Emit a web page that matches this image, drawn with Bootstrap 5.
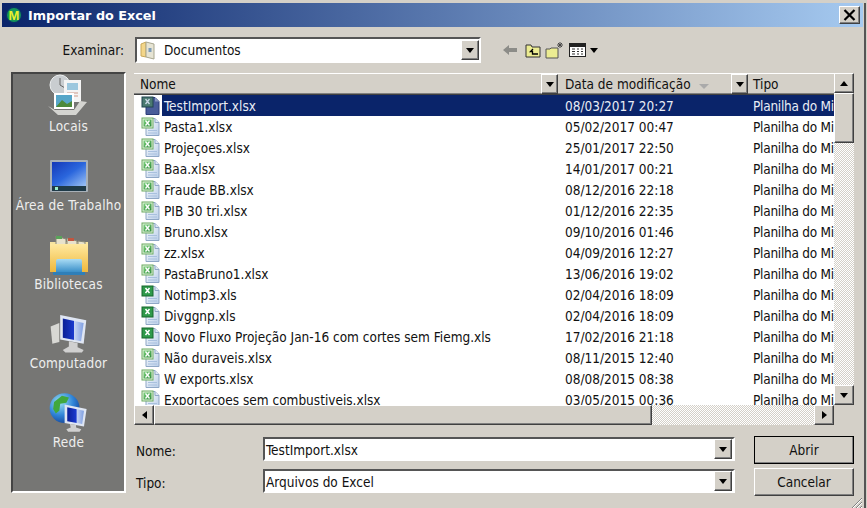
<!DOCTYPE html>
<html lang="pt"><head><meta charset="utf-8"><title>Importar do Excel</title>
<link href="https://cdn.jsdelivr.net/npm/bootstrap@5.3.0/dist/css/bootstrap.min.css" rel="stylesheet">
<style>
html,body{margin:0;height:508px;overflow:hidden;background:#d4d0c8}
body{font-family:"DejaVu Sans",Verdana,sans-serif;font-stretch:condensed;font-size:13.5px;color:#111;line-height:1}
.dlg{width:866px;height:508px;border-right:2px solid #555;position:relative}
.title-bar{margin:3px 0 0 2px;width:861px;height:24px;background:linear-gradient(90deg,#0a246a,#a6caf0);color:#fff;font:bold 12.8px "DejaVu Sans",sans-serif;padding-left:3px;padding-right:3px}
.title-bar svg{margin-right:5px}
.raised{background:#d4d0c8;border:1px solid;border-color:#fff #404040 #404040 #fff;box-shadow:inset -1px -1px #808080;font:inherit;color:inherit}
.x-btn{width:21px;height:18px;margin-left:auto}
.look-row{height:26px;margin-top:10px}
.lbl-look{width:124px;text-align:right;margin-right:11px;padding-top:2px}
.sunken{background:#fff;border:2px solid;border-color:#555 #fff #fff #555;outline:1px solid #d4d0c8}
.look{width:346px;height:26px;padding-left:3px}
.look .fname{margin-left:8px;padding-top:2px}
.dd{width:18px;height:20px;margin-left:auto;flex:none}
.tri{width:0;height:0;border-left:4.5px solid transparent;border-right:4.5px solid transparent;border-top:5px solid #000}
.tri-u{border-top:0;border-bottom:5px solid #000}
.tri-l{border:4.5px solid transparent;border-left:0;border-right:5px solid #000}
.tri-r{border:4.5px solid transparent;border-right:0;border-left:5px solid #000}
.tools{margin-left:22px;gap:4px}
.main-row{margin-top:9px}
.places{margin-left:11px;width:115px;height:421px;background:#767674;border:2px solid;border-color:#444 #fff #fff #444;color:#eee;font-size:13.5px;white-space:nowrap;letter-spacing:.2px}
.place{height:79px;text-align:center}
.place svg{display:block;margin:0 auto 1px}
.place span{display:block;line-height:14px}
.right-col{margin-left:8px;width:720px;padding-top:1px}
.list-wrap{height:352px}
.list-col{width:700px;flex:none}
.hdr{height:22px;background:#d4d0c8;border-top:1px solid #fff;border-bottom:1px solid #404040;box-shadow:inset 0 -1px #808080}
.hc{padding-top:4px;height:20px}
.c1{width:425px;flex:none;padding-left:6px}.c2{width:190px;flex:none;padding-left:6px}.c3{width:85px;flex:none;padding-left:4px;overflow:hidden;white-space:nowrap}
.hdd{width:17px;height:20px;margin-left:auto;margin-right:1px;flex:none;margin-top:-4px}
.sort-tri{border-left:5px solid transparent;border-right:5px solid transparent;border-top:5px solid #aaa;width:0;height:0;margin-left:8px}
.rows{height:310px;overflow:hidden;background:#fff}
.frow{height:21px;flex:none;white-space:nowrap}
.frow .c1{padding-left:7px}
.frow .c1 svg{flex:none;margin-right:1px;margin-top:1px}
.fn{padding:5px 2px 0;height:21px;display:block;flex:1}
.frow .c2,.frow .c3{height:21px;padding-top:5px}
.frow .c3{letter-spacing:-.25px}
.sel{color:#e8ecf5}
.sel .fn,.sel .c2,.sel .c3{background:#0a246a}
.hbar{height:20px;background:repeating-conic-gradient(#fff 0 25%,#d4d0c8 0 50%) 0 0/2px 2px}
.sbtn{width:20px;height:20px;flex:none}
.hthumb{width:498px;height:20px;flex:none}
.vbar{width:20px;height:332px;background:repeating-conic-gradient(#fff 0 25%,#d4d0c8 0 50%) 0 0/2px 2px}
.vthumb{height:50px;width:20px;flex:none}
.form-rows{margin-top:12px;gap:8px}
.form-line{height:24px}
.lab{width:129px;padding-left:2px;padding-top:8px}
.inp{width:472px;height:24px;padding:5px 1px 0}
.inp .dd{margin-top:-5px;height:20px}
.bbtn{width:100px;height:28px;margin-left:19px;margin-top:-1px;flex:none;padding:1px 0 0}
.bdef{outline:1px solid #000;outline-offset:-1px}
.grip{position:absolute;right:1px;bottom:1px}
</style></head>
<body>
<svg width="0" height="0" class="d-block">
<defs>
<linearGradient id="pg" x1="0" y1="0" x2="1" y2="1"><stop offset="0" stop-color="#fff"/><stop offset="1" stop-color="#b8cde8"/></linearGradient>
<linearGradient id="gb" x1="0" y1="0" x2="1" y2="1"><stop offset="0" stop-color="#7fd27f"/><stop offset="1" stop-color="#2d8a3a"/></linearGradient>
<linearGradient id="scr" x1="0" y1="0" x2="1" y2="1"><stop offset="0" stop-color="#1338b8"/><stop offset=".5" stop-color="#2a66dd"/><stop offset="1" stop-color="#9cc2f4"/></linearGradient>
<linearGradient id="scr2" x1="0" y1="0" x2="1" y2="0"><stop offset="0" stop-color="#0a1f96"/><stop offset=".55" stop-color="#1a3bd0"/><stop offset=".56" stop-color="#c5d4f2"/><stop offset="1" stop-color="#7f9fe2"/></linearGradient>
<linearGradient id="fold" x1="0" y1="0" x2="0" y2="1"><stop offset="0" stop-color="#ffe9a0"/><stop offset="1" stop-color="#efb83c"/></linearGradient>
<linearGradient id="bl" x1="0" y1="0" x2="0" y2="1"><stop offset="0" stop-color="#a9dcf5"/><stop offset="1" stop-color="#3a8fc8"/></linearGradient>
<radialGradient id="globe" cx=".35" cy=".3" r=".8"><stop offset="0" stop-color="#9fe4f0"/><stop offset=".55" stop-color="#2f84d8"/><stop offset="1" stop-color="#123c90"/></radialGradient>
<symbol id="xl" viewBox="0 0 20 20">
<path d="M5 1.500h9l4 4v13H5z" fill="url(#pg)" stroke="#8fa7c6"/><path d="M14 1.500v4h4" fill="#dfe9f5" stroke="#8fa7c6"/>
<path d="M7 13.500h9M7 16h9" stroke="#a8c0de"/>
<rect x="1" y="1" width="11" height="10" fill="#e3f3dd" stroke="#6dab62"/>
<rect x="2.500" y="2.500" width="8" height="7" fill="url(#gb)"/>
<path d="M4.500 3.500l4 5M8.500 3.500l-4 5" stroke="#fff" stroke-width="1.300"/></symbol>
<symbol id="xl2" viewBox="0 0 20 20">
<path d="M5 1.500h9l4 4v13H5z" fill="url(#pg)" stroke="#8fa7c6"/><path d="M14 1.500v4h4" fill="#dfe9f5" stroke="#8fa7c6"/>
<path d="M7 13.500h9M7 16h9" stroke="#a8c0de"/>
<rect x="1" y="1" width="11" height="10" fill="#2f9a4b" stroke="#17672c"/>
<path d="M4.500 3l4 5M8.500 3l-4 5" stroke="#fff" stroke-width="1.500"/></symbol>
<symbol id="xls" viewBox="0 0 20 20">
<path d="M5 1.500h9l4 4v13H5z" fill="#4a5d9a" stroke="#2c3d78"/><path d="M14 1.500v4h4" fill="#8896c0"/>
<rect x="1" y="1" width="11" height="10" fill="#4b7a70" stroke="#20434f"/>
<path d="M4.500 3l4 5M8.500 3l-4 5" stroke="#c9d6e4" stroke-width="1.300"/></symbol>
</defs></svg>
<div class="dlg">
<div class="title-bar d-flex align-items-center">
<svg width="18" height="18" viewBox="0 0 18 18"><circle cx="9" cy="9" r="8.500" fill="#0b2f6a"/><circle cx="9" cy="9" r="7" fill="#14965a"/><text x="9" y="13.500" text-anchor="middle" font-size="13" font-weight="700" font-family="Liberation Sans" fill="#e9f02c">M</text></svg>
<span>Importar do Excel</span>
<button class="x-btn raised p-0 d-flex align-items-center justify-content-center" type="button" aria-label="Fechar"><svg class="m-0" width="13" height="12" viewBox="0 0 13 12"><path d="M1.500 1l10 10M11.500 1l-10 10" stroke="#000" stroke-width="2.200"/></svg></button>
</div>

<div class="look-row d-flex align-items-center">
<div class="lbl-look">Examinar:</div>
<div class="look sunken d-flex align-items-center">
<svg width="16" height="20" viewBox="0 0 16 20"><path d="M1 4l5-2v15l-5-1z" fill="#f3d68a" stroke="#c9a85a"/><path d="M6 2l8 2v15l-8-2z" fill="#e6e4d4" stroke="#a8a68f"/><rect x="8.500" y="8" width="3" height="4" fill="#7c9bb8"/></svg>
<span class="fname">Documentos</span>
<div class="dd raised d-flex align-items-center justify-content-center"><div class="tri"></div></div>
</div>
<div class="tools d-flex align-items-center">
<svg class="me-1" width="14" height="12" viewBox="0 0 14 12"><path d="M0 6l6-5v3h8v4H6v3z" fill="#8c8c88"/></svg>
<svg width="16" height="15" viewBox="0 0 16 15"><path d="M1 14V2h5l1 2h8v10z" fill="#ecec92" stroke="#333"/><path d="M8 6L5.500 8.500H7.500V11H13" fill="none" stroke="#000" stroke-width="1.300"/></svg>
<svg width="20" height="18" viewBox="0 0 20 18"><path d="M1 17V8h4l1-1h7v10z" fill="#ecec92" stroke="#555"/><path d="M15 1v6M12 4h6M13 2l4 4M17 2l-4 4" stroke="#444"/></svg>
<div class="d-flex align-items-center"><svg class="me-1" width="17" height="14" viewBox="0 0 17 14"><rect x=".5" y=".5" width="16" height="13" fill="#fff" stroke="#222"/><rect x="1" y="1" width="15" height="3" fill="#222"/><path d="M3 6h3M8 6h2M12 6h2M3 8.500h3M8 8.500h2M12 8.500h2M3 11h3M8 11h2M12 11h2" stroke="#333"/></svg>
<div class="tri"></div></div>
</div>
</div>

<div class="main-row d-flex">
<div class="places">
<div class="place"><svg width="48" height="44" viewBox="0 0 48 44"><circle cx="15" cy="11" r="10" fill="#c9cdd0" stroke="#eceff0"/><path d="M15 4v7l5 3" stroke="#666" fill="none"/><rect x="19" y="6" width="17" height="22" fill="#f4f4f4"/><rect x="22" y="9" width="11" height="7" fill="#9cc7de"/><path d="M22 19h11M22 22h11" stroke="#c98"/><rect x="9" y="19" width="20" height="16" fill="#fff"/><rect x="11" y="21" width="16" height="12" fill="#57a6c8"/><path d="M11 33l6-7 5 4 5-3v6z" fill="#4c8a3a"/><path d="M3 32l10 9h18l11-13-7-1-6 9H10z" fill="#d4d4d0"/></svg><span>Locais</span></div>
<div class="place"><svg width="48" height="44" viewBox="0 0 48 44"><rect x="5" y="7" width="38" height="32" rx="1" fill="#a7b0b8"/><rect x="7" y="9" width="34" height="24" fill="url(#scr)"/><rect x="7" y="33" width="34" height="5" fill="#1f3a48"/><rect x="10" y="34" width="3" height="3" fill="#9ec"/></svg><span>Área de Trabalho</span></div>
<div class="place"><svg width="48" height="44" viewBox="0 2 48 44"><path d="M5 12h38v7H5z" fill="#f7e4a0"/><path d="M11 6l10 3v6H11zM22 8l10 3v4H22zM33 11l7 1v4h-7z" fill="#e8e2cc" stroke="#887"/><path d="M11 6h6v3h-6z" fill="#59a35a"/><path d="M23 8h6v3h-6z" fill="#c2553f"/><path d="M5 14h38v28H5z" fill="url(#fold)"/><path d="M13 29h22a2 2 0 0 1 2 2v11H11V31a2 2 0 0 1 2-2z" fill="url(#bl)"/><path d="M8 42h32v3H8z" fill="#2f7fb8"/></svg><span>Bibliotecas</span></div>
<div class="place"><svg width="48" height="44" viewBox="0 0 48 44"><g transform="translate(3 1.500) scale(.87)"><path d="M3 16l10-4v22l-8 2z" fill="#d8d8d4"/><path d="M14 3l30 6-3 27-27-5z" fill="#dfe6f3"/><path d="M17 7l24 5-3 21-21-4z" fill="url(#scr2)"/><path d="M24 33l10 2v5l7 3-2 3H20l-3-3 7-4z" fill="#d0d0d0"/></g></svg><span>Computador</span></div>
<div class="place"><svg width="48" height="44" viewBox="0 0 48 44"><g transform="translate(2 .500) scale(.88)"><circle cx="20" cy="20" r="17" fill="url(#globe)"/><path d="M8 13l9-7 8 2-3 6-7 1-1 8-4 3-3-5zM24 26l6 2-2 8-4 1z" fill="#41a83e"/><path d="M20 16l25 5-3 20-22-4z" fill="#dfe6f3"/><path d="M23 19l19 4-2 15-17-3z" fill="url(#scr2)"/><path d="M26 38l7 1v3l6 2-2 3H24l-2-3 5-2z" fill="#d0d0d0"/></g></svg><span>Rede</span></div>
</div>

<div class="right-col">
<div class="list-wrap d-flex">
<div class="list-col">
<div class="hdr d-flex">
<div class="c1 hc d-flex">Nome<div class="hdd raised d-flex align-items-center justify-content-center"><div class="tri"></div></div></div>
<div class="c2 hc d-flex">Data de modificação<div class="sort-tri align-self-center"></div><div class="hdd raised d-flex align-items-center justify-content-center"><div class="tri"></div></div></div>
<div class="c3 hc">Tipo</div>
</div>
<div class="rows d-flex flex-column">
<div class="frow sel d-flex"><div class="c1 d-flex"><svg width="20" height="20"><use href="#xls"/></svg><span class="fn">TestImport.xlsx</span></div><div class="c2">08/03/2017 20:27</div><div class="c3">Planilha do Microsoft</div></div>
<div class="frow d-flex"><div class="c1 d-flex"><svg width="20" height="20"><use href="#xl"/></svg><span class="fn">Pasta1.xlsx</span></div><div class="c2">05/02/2017 00:47</div><div class="c3">Planilha do Microsoft</div></div>
<div class="frow d-flex"><div class="c1 d-flex"><svg width="20" height="20"><use href="#xl"/></svg><span class="fn">Projeçoes.xlsx</span></div><div class="c2">25/01/2017 22:50</div><div class="c3">Planilha do Microsoft</div></div>
<div class="frow d-flex"><div class="c1 d-flex"><svg width="20" height="20"><use href="#xl"/></svg><span class="fn">Baa.xlsx</span></div><div class="c2">14/01/2017 00:21</div><div class="c3">Planilha do Microsoft</div></div>
<div class="frow d-flex"><div class="c1 d-flex"><svg width="20" height="20"><use href="#xl"/></svg><span class="fn">Fraude BB.xlsx</span></div><div class="c2">08/12/2016 22:18</div><div class="c3">Planilha do Microsoft</div></div>
<div class="frow d-flex"><div class="c1 d-flex"><svg width="20" height="20"><use href="#xl"/></svg><span class="fn">PIB 30 tri.xlsx</span></div><div class="c2">01/12/2016 22:35</div><div class="c3">Planilha do Microsoft</div></div>
<div class="frow d-flex"><div class="c1 d-flex"><svg width="20" height="20"><use href="#xl"/></svg><span class="fn">Bruno.xlsx</span></div><div class="c2">09/10/2016 01:46</div><div class="c3">Planilha do Microsoft</div></div>
<div class="frow d-flex"><div class="c1 d-flex"><svg width="20" height="20"><use href="#xl"/></svg><span class="fn">zz.xlsx</span></div><div class="c2">04/09/2016 12:27</div><div class="c3">Planilha do Microsoft</div></div>
<div class="frow d-flex"><div class="c1 d-flex"><svg width="20" height="20"><use href="#xl"/></svg><span class="fn">PastaBruno1.xlsx</span></div><div class="c2">13/06/2016 19:02</div><div class="c3">Planilha do Microsoft</div></div>
<div class="frow d-flex"><div class="c1 d-flex"><svg width="20" height="20"><use href="#xl2"/></svg><span class="fn">Notimp3.xls</span></div><div class="c2">02/04/2016 18:09</div><div class="c3">Planilha do Microsoft</div></div>
<div class="frow d-flex"><div class="c1 d-flex"><svg width="20" height="20"><use href="#xl2"/></svg><span class="fn">Divggnp.xls</span></div><div class="c2">02/04/2016 18:09</div><div class="c3">Planilha do Microsoft</div></div>
<div class="frow d-flex"><div class="c1 d-flex"><svg width="20" height="20"><use href="#xl2"/></svg><span class="fn">Novo Fluxo Projeção Jan-16 com cortes sem Fiemg.xls</span></div><div class="c2">17/02/2016 21:18</div><div class="c3">Planilha do Microsoft</div></div>
<div class="frow d-flex"><div class="c1 d-flex"><svg width="20" height="20"><use href="#xl"/></svg><span class="fn">Não duraveis.xlsx</span></div><div class="c2">08/11/2015 12:40</div><div class="c3">Planilha do Microsoft</div></div>
<div class="frow d-flex"><div class="c1 d-flex"><svg width="20" height="20"><use href="#xl"/></svg><span class="fn">W exports.xlsx</span></div><div class="c2">08/08/2015 08:38</div><div class="c3">Planilha do Microsoft</div></div>
<div class="frow d-flex"><div class="c1 d-flex"><svg width="20" height="20"><use href="#xl"/></svg><span class="fn">Exportacoes sem combustiveis.xlsx</span></div><div class="c2">03/05/2015 00:36</div><div class="c3">Planilha do Microsoft</div></div>
</div>
<div class="hbar d-flex">
<div class="sbtn raised d-flex align-items-center justify-content-center"><div class="tri-l"></div></div>
<div class="hthumb raised"></div>
<div class="sbtn raised ms-auto d-flex align-items-center justify-content-center"><div class="tri-r"></div></div>
</div>
</div>
<div class="vbar d-flex flex-column">
<div class="sbtn raised d-flex align-items-center justify-content-center"><div class="tri tri-u"></div></div>
<div class="vthumb raised"></div>
<div class="sbtn raised mt-auto d-flex align-items-center justify-content-center"><div class="tri"></div></div>
</div>
</div>
<div class="form-rows d-flex flex-column">
<div class="form-line d-flex">
<div class="lab">Nome:</div>
<div class="inp sunken d-flex">TestImport.xlsx<div class="dd raised d-flex align-items-center justify-content-center"><div class="tri"></div></div></div>
<button type="button" class="bbtn raised bdef">Abrir</button>
</div>
<div class="form-line d-flex">
<div class="lab">Tipo:</div>
<div class="inp sunken d-flex">Arquivos do Excel<div class="dd raised d-flex align-items-center justify-content-center"><div class="tri"></div></div></div>
<button type="button" class="bbtn raised">Cancelar</button>
</div>
</div>
</div>
</div>
<svg class="grip" width="14" height="14" viewBox="0 0 14 14"><path d="M13 2L2 13M13 6L6 13M13 10l-3 3" stroke="#808080"/><path d="M13 3L3 13M13 7l-6 6M13 11l-2 2" stroke="#fff"/></svg>
</div>
<script src="https://cdn.jsdelivr.net/npm/bootstrap@5.3.0/dist/js/bootstrap.bundle.min.js"></script>
</body></html>
